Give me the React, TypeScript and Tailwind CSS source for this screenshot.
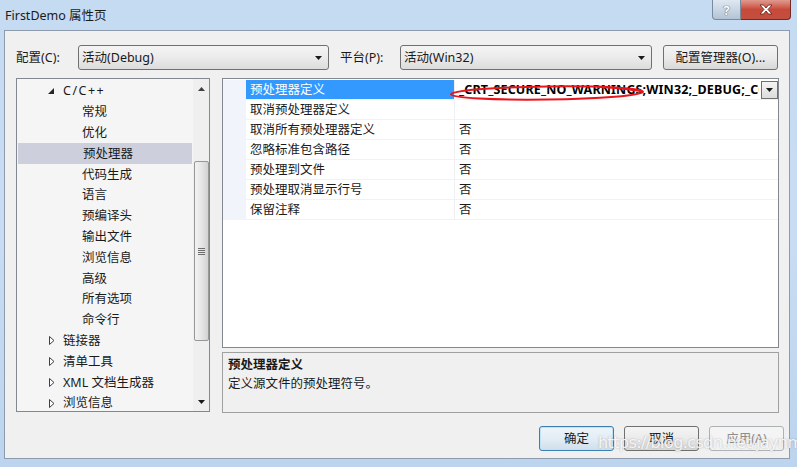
import React from "react";

const treeItems: { label: string; level: number; arrow?: "open" | "closed"; selected?: boolean }[] = [
  { label: "C/C++", level: 0, arrow: "open" },
  { label: "常规", level: 1 },
  { label: "优化", level: 1 },
  { label: "预处理器", level: 1, selected: true },
  { label: "代码生成", level: 1 },
  { label: "语言", level: 1 },
  { label: "预编译头", level: 1 },
  { label: "输出文件", level: 1 },
  { label: "浏览信息", level: 1 },
  { label: "高级", level: 1 },
  { label: "所有选项", level: 1 },
  { label: "命令行", level: 1 },
  { label: "链接器", level: 0, arrow: "closed" },
  { label: "清单工具", level: 0, arrow: "closed" },
  { label: "XML 文档生成器", level: 0, arrow: "closed" },
  { label: "浏览信息", level: 0, arrow: "closed" },
];

const gridRows: { name: string; value: string; selected?: boolean; bold?: boolean }[] = [
  { name: "预处理器定义", value: "_CRT_SECURE_NO_WARNINGS;WIN32;_DEBUG;_CONSOLE;%(PreprocessorDefinitions)", selected: true, bold: true },
  { name: "取消预处理器定义", value: "" },
  { name: "取消所有预处理器定义", value: "否" },
  { name: "忽略标准包含路径", value: "否" },
  { name: "预处理到文件", value: "否" },
  { name: "预处理取消显示行号", value: "否" },
  { name: "保留注释", value: "否" },
];

function DownTri({ className = "" }: { className?: string }) {
  return (
    <svg width="7" height="4" viewBox="0 0 7 4" className={className}>
      <path d="M0 0 H7 L3.5 4 Z" fill="#1a1a1a" />
    </svg>
  );
}

function Combo({ text, w }: { text: string; w: string }) {
  return (
    <div
      className={`${w} h-[25px] rounded-[3px] border border-[#707070] bg-linear-to-b from-[#f4f4f4] via-[#ebebeb] to-[#dcdcdc] flex items-center pl-[3px] pr-[6px]`}
    >
      <span className="flex-1 text-[12.5px] leading-[16px] text-[#1a1a1a]">{text}</span>
      <DownTri />
    </div>
  );
}

function Btn({ text, kind = "normal", w = "w-[75px]" }: { text: string; kind?: "normal" | "default" | "disabled"; w?: string }) {
  const cls =
    kind === "default"
      ? "border-[#3c7fb1] from-[#eef5fa] via-[#e3edf5] to-[#cfdfeb] text-[#1a1a1a] shadow-[inset_0_0_0_1px_#bfe3f7]"
      : kind === "disabled"
      ? "border-[#adb2b5] from-[#f4f4f4] via-[#f4f4f4] to-[#f4f4f4] text-[#8d8d8d]"
      : "border-[#707070] from-[#f4f4f4] via-[#ebebeb] to-[#d8d8d8] text-[#1a1a1a]";
  return (
    <div
      className={`${w} h-[25px] rounded-[3px] border bg-linear-to-b ${cls} flex items-center justify-center text-[12.5px] leading-[16px]`}
    >
      {text}
    </div>
  );
}

export default function App() {
  return (
    <div className="relative w-[797px] h-[467px] overflow-hidden bg-linear-to-b from-[#c5dbf2] via-[#c8ddf3] to-[#bcd4ee] font-['Noto_Sans','Noto_Sans_CJK_SC',sans-serif] text-[#1a1a1a]">
      {/* Title bar */}
      <div className="h-[30px] flex items-start">
        <div className="pl-[5px] pt-[7px] text-[12.5px] leading-[18px] text-[#1a1a1a]">FirstDemo 属性页</div>
        <div className="ml-auto mr-[6px] flex">
          <div className="w-[29px] h-[20px] rounded-bl-[4px] border border-[#7a8ba0] border-t-0 bg-linear-to-b from-[#dfe8f2] via-[#c9d6e4] to-[#b4c3d4] flex items-center justify-center">
            <span className="text-[13px] leading-[14px] font-bold text-white [text-shadow:0_0_1px_#4a5a70,0_0_1px_#4a5a70]">?</span>
          </div>
          <div className="w-[50px] h-[20px] rounded-br-[4px] border border-l-0 border-t-0 border-[#6e2b24] bg-linear-to-b from-[#e09a8f] via-[#c8493a] to-[#c2503f] flex items-center justify-center">
            <svg width="14" height="11" viewBox="0 0 14 11">
              <path d="M1 1 H4.5 L7 4 L9.5 1 H13 L9 5.5 L13 10 H9.5 L7 7 L4.5 10 H1 L5 5.5 Z" fill="#ffffff" stroke="#5a1f18" strokeWidth="0.8" strokeLinejoin="round" />
            </svg>
          </div>
        </div>
      </div>

      {/* Client area */}
      <div className="ml-[4px] w-[786px] h-[429px] border border-[#8d9bad] bg-[#f0f0f0] flex flex-col">
        {/* Top row */}
        <div className="mt-[14px] h-[25px] flex items-center pl-[11px] text-[12.5px] leading-[16px]">
          <span className="w-[62px]">配置(C):</span>
          <Combo text="活动(Debug)" w="w-[251px]" />
          <span className="ml-[11px] w-[60px]">平台(P):</span>
          <Combo text="活动(Win32)" w="w-[252px]" />
          <div className="ml-[11px]">
            <Btn text="配置管理器(O)..." w="w-[115px]" />
          </div>
        </div>

        {/* Main area */}
        <div className="mt-[8px] flex">
          {/* Tree */}
          <div className="ml-[11px] w-[194px] h-[334px] border border-[#828790] bg-[#f5f5f5] flex">
            <div className="flex-1 pt-[2px]">
              {treeItems.map((it, i) => (
                <div
                  key={i}
                  className={`h-[20.8px] flex items-center text-[12.5px] leading-[16px] ${it.selected ? "bg-[#cdd0dc] ml-[1px] mr-[1px]" : ""}`}
                >
                  <div className={`${it.selected ? "w-[30px]" : "w-[31px]"} ${it.level === 1 ? "w-[65px]" : ""} shrink-0`} />
                  {it.level === 0 && (
                    <div className="w-[15px] shrink-0 flex items-center">
                      {it.arrow === "open" ? (
                        <svg width="6" height="6" viewBox="0 0 6 6">
                          <path d="M6 0 V6 H0 Z" fill="#262626" />
                        </svg>
                      ) : (
                        <svg width="6" height="9" viewBox="0 0 6 9" className="ml-[1px]">
                          <path d="M0.5 0.5 L5 4.5 L0.5 8.5 Z" fill="#ffffff" stroke="#404040" strokeWidth="1" />
                        </svg>
                      )}
                    </div>
                  )}
                  <span className={it.label === "C/C++" ? "tracking-[1.5px]" : ""}>{it.label}</span>
                </div>
              ))}
            </div>
            {/* Scrollbar */}
            <div className="w-[16px] bg-[#efefef] flex flex-col items-center">
              <div className="h-[19px] flex items-center justify-center">
                <svg width="7" height="4" viewBox="0 0 7 4">
                  <path d="M0 4 H7 L3.5 0 Z" fill="#404040" />
                </svg>
              </div>
              <div className="mt-[63px] w-[15px] h-[180px] rounded-[2px] border border-[#979797] bg-linear-to-r from-[#f2f2f2] via-[#e6e6e6] to-[#d2d2d2] flex items-center justify-center">
                <div className="flex flex-col gap-[1px]">
                  <div className="w-[7px] h-[1px] bg-[#6e6e6e]" />
                  <div className="w-[7px] h-[1px] bg-[#6e6e6e]" />
                  <div className="w-[7px] h-[1px] bg-[#6e6e6e]" />
                  <div className="w-[7px] h-[1px] bg-[#6e6e6e]" />
                </div>
              </div>
              <div className="flex-1" />
              <div className="h-[19px] flex items-center justify-center">
                <DownTri />
              </div>
            </div>
          </div>

          {/* Right column */}
          <div className="ml-[12px] w-[557px] flex flex-col">
            <div className="h-[270px] border border-[#828790] bg-white pt-[1px]">
              {gridRows.map((r, i) => (
                <div key={i} className="h-[20px] flex text-[12.5px] leading-[16px]">
                  <div className="w-[23px] shrink-0 bg-[#f1f4fa]" />
                  <div
                    className={`w-[208px] shrink-0 flex items-center pl-[4px] border-b border-[#f0f2f6] ${r.selected ? "bg-[#3399ff] text-white border-[#3399ff]" : ""}`}
                  >
                    {r.name}
                  </div>
                  <div className="w-[1px] bg-[#eef0f4]" />
                  <div className="flex-1 min-w-0 flex items-center border-b border-[#f0f2f6] relative">
                    <span className={`pl-[4px] whitespace-nowrap overflow-hidden ${r.bold ? "font-bold w-[304px] tracking-[0.15px] text-black" : ""}`}>{r.value}</span>
                    {r.selected && (
                      <div className="absolute right-0 top-[1px] w-[17px] h-[18px] border border-[#707070] bg-linear-to-b from-[#f4f4f4] to-[#dcdcdc] flex items-center justify-center">
                        <DownTri />
                      </div>
                    )}
                  </div>
                </div>
              ))}
            </div>
            <div className="mt-[4px] h-[61px] border border-[#a0a0a0] bg-[#f0f0f0] pl-[5px] pt-[2px] text-[12.5px] leading-[19px]">
              <div className="font-bold">预处理器定义</div>
              <div>定义源文件的预处理符号。</div>
            </div>
          </div>
        </div>

        {/* Buttons */}
        <div className="mt-[13px] flex justify-end gap-[10px] pr-[5px]">
          <Btn text="确定" kind="default" />
          <Btn text="取消" />
          <Btn text="应用(A)" kind="disabled" />
        </div>
      </div>

      {/* Red annotation ellipse */}
      <svg className="absolute left-[447px] top-[83px]" width="200" height="20" viewBox="0 0 200 20">
        <ellipse cx="100" cy="10" rx="96" ry="6.5" fill="none" stroke="#e8141b" strokeWidth="2" transform="rotate(-0.8 100 10)" />
        <path d="M150 4 Q185 6 196 9" fill="none" stroke="#e8141b" strokeWidth="1.5" />
      </svg>

      {/* Watermark */}
      <div className="absolute left-[598px] top-[433px] text-[16px] leading-[20px] text-white/85 [text-shadow:0_0_2px_rgba(120,120,120,0.6)] font-['DejaVu_Sans',sans-serif] tracking-[-0.6px]">
        https://blog.csdn.net/jaynm
      </div>
    </div>
  );
}
